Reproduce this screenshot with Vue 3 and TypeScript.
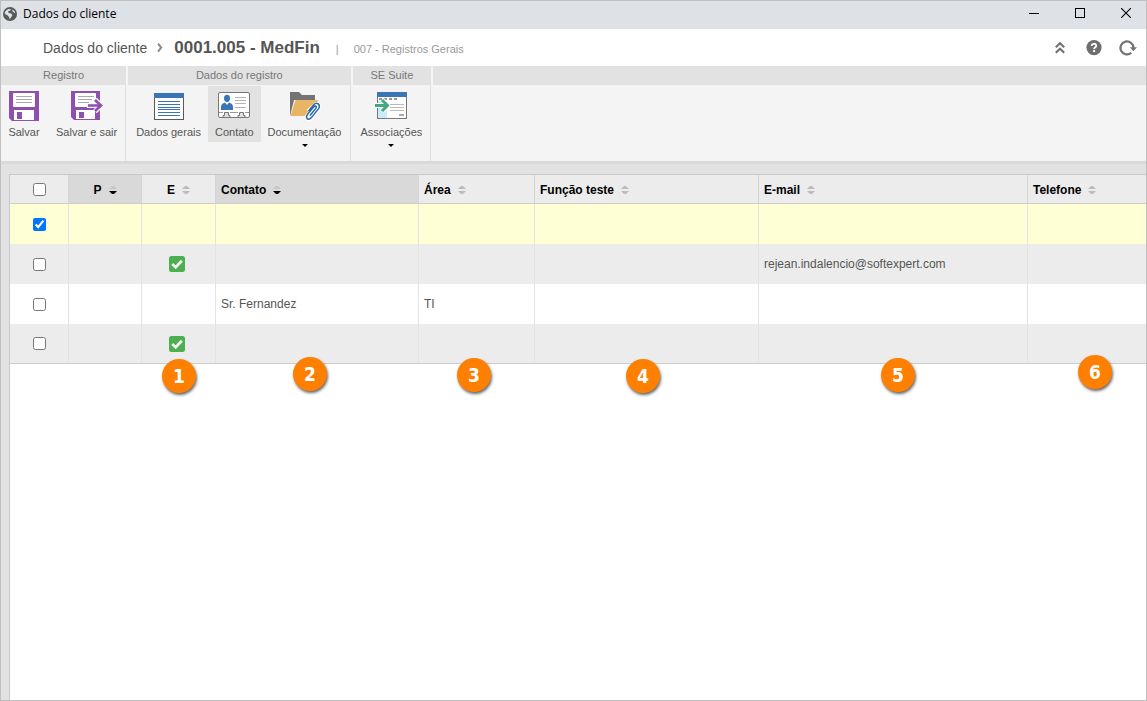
<script setup lang="ts">
import { ref } from 'vue'

interface Column {
  key: string
  label: string
  centered?: boolean
  sorted?: boolean
}

interface Contact {
  id: number
  selected: boolean
  standard: boolean
  name: string
  area: string
  role: string
  email: string
  phone: string
}

const columns: Column[] = [
  { key: 'p', label: 'P', centered: true, sorted: true },
  { key: 'e', label: 'E', centered: true },
  { key: 'contact', label: 'Contato', sorted: true },
  { key: 'area', label: 'Área' },
  { key: 'role', label: 'Função teste' },
  { key: 'email', label: 'E-mail' },
  { key: 'phone', label: 'Telefone' },
]

const rows = ref<Contact[]>([
  { id: 1, selected: true, standard: false, name: '', area: '', role: '', email: '', phone: '' },
  { id: 2, selected: false, standard: true, name: '', area: '', role: '', email: 'rejean.indalencio@softexpert.com', phone: '' },
  { id: 3, selected: false, standard: false, name: 'Sr. Fernandez', area: 'TI', role: '', email: '', phone: '' },
  { id: 4, selected: false, standard: true, name: '', area: '', role: '', email: '', phone: '' },
])

const allSelected = ref(false)

function toggleAll() {
  rows.value.forEach((r) => (r.selected = allSelected.value))
}

// Marker positions on the work area
const markers = [
  { n: 1, x: 152, y: 184 },
  { n: 2, x: 283, y: 182 },
  { n: 3, x: 447, y: 183 },
  { n: 4, x: 616, y: 184 },
  { n: 5, x: 871, y: 183 },
  { n: 6, x: 1068, y: 180 },
]
</script>

<template>
  <div class="window">
    <header class="titlebar">
      <svg class="globe" width="14" height="14" viewBox="0 0 14 14" aria-hidden="true">
        <circle cx="7" cy="7" r="7" fill="#58595b" />
        <path d="M1.8 5.2Q3 3 5.5 2L8 2.2L7.2 3.6L5 4.6L5.6 6L8.4 6.6L9.4 8.4L7.8 10.8L6.6 12.2L6 10L4.4 8.2L2 7ZM9.6 2.4L11.8 4.4L12.2 6.2L10.4 5.2L9.2 3.8Z" fill="#dee1e6" />
      </svg>
      <span class="window-title">Dados do cliente</span>
      <div class="window-controls">
        <button type="button" aria-label="Minimizar">
          <svg width="10" height="10" viewBox="0 0 10 10"><path d="M0 5.5H10" stroke="#000" /></svg>
        </button>
        <button type="button" aria-label="Maximizar">
          <svg width="10" height="10" viewBox="0 0 10 10"><rect x=".5" y=".5" width="9" height="9" fill="none" stroke="#000" /></svg>
        </button>
        <button type="button" aria-label="Fechar">
          <svg width="10" height="10" viewBox="0 0 10 10"><path d="M0 0L10 10M10 0L0 10" stroke="#000" stroke-width="1.1" /></svg>
        </button>
      </div>
    </header>

    <div class="crumbs">
      <nav class="path" aria-label="Localização">
        <a href="#" class="crumb">Dados do cliente</a>
        <svg class="sep" width="6" height="10" viewBox="0 0 6 10" aria-hidden="true"><path d="M1 .6L4.2 4.6L1 8.6" fill="none" stroke="#8a8a8a" stroke-width="2" /></svg>
        <h1>0001.005 - MedFin</h1>
        <span class="bar">|</span>
        <span class="category">007 - Registros Gerais</span>
      </nav>
      <div class="actions">
        <button type="button" aria-label="Recolher">
          <svg width="18" height="18" viewBox="0 0 18 18"><path d="M4.8 8.2L9 4.2L13.2 8.2M4.8 13.7L9 9.7L13.2 13.7" fill="none" stroke="#737373" stroke-width="2.2" /></svg>
        </button>
        <button type="button" aria-label="Ajuda">
          <svg width="18" height="18" viewBox="0 0 18 18">
            <circle cx="9" cy="8.6" r="7.6" fill="#6e6e6e" />
            <path d="M6.7 6.9C6.7 4.1 11.3 4.1 11.3 6.7C11.3 8.3 9.1 8.2 9.1 10.1" fill="none" stroke="#fff" stroke-width="1.8" />
            <rect x="8.1" y="11" width="2" height="2" fill="#fff" />
          </svg>
        </button>
        <button type="button" aria-label="Atualizar">
          <svg width="18" height="18" viewBox="0 0 18 18">
            <path d="M12.3 13.8A6.5 6.5 0 1 1 14.5 8.9" fill="none" stroke="#737373" stroke-width="2.2" />
            <path d="M10.8 8.2H18L14.4 12.2Z" fill="#737373" />
          </svg>
        </button>
      </div>
    </div>

    <div class="ribbon">
      <section class="group">
        <h2>Registro</h2>
        <div class="tools spaced">
          <button type="button" class="tool">
            <svg width="32" height="32" viewBox="0 0 32 32" aria-hidden="true">
              <path d="M1 1H31V31H4L1 28Z" fill="#8e50ae" />
              <rect x="5" y="3" width="22" height="14" rx="1" fill="#fff" />
              <path d="M8 6.5H24M8 9.5H24M8 12.5H24" stroke="#aaa" />
              <rect x="6" y="20" width="20" height="10" fill="#fff" />
              <rect x="9" y="22" width="5" height="7" fill="#8e50ae" />
            </svg>
            <span>Salvar</span>
          </button>
          <button type="button" class="tool">
            <svg width="32" height="32" viewBox="0 0 32 32" aria-hidden="true">
              <path d="M0 1H29V30H3L0 27Z" fill="#8e50ae" />
              <rect x="4" y="3" width="21" height="14" rx="1" fill="#fff" />
              <path d="M7 6.5H23M7 9.5H21M7 12.5H18" stroke="#aaa" />
              <rect x="5" y="20" width="19" height="9" fill="#fff" />
              <rect x="8" y="22" width="5" height="6" fill="#8e50ae" />
              <path d="M16 15.5H30M24 9.5L30 15.5L24 21.5" fill="none" stroke="#f4f4f4" stroke-width="5" />
              <path d="M17 15.5H30M24 10L30 15.5L24 21" fill="none" stroke="#8e50ae" stroke-width="2.6" />
            </svg>
            <span>Salvar e sair</span>
          </button>
        </div>
      </section>

      <section class="group">
        <h2>Dados do registro</h2>
        <div class="tools">
          <button type="button" class="tool">
            <svg width="32" height="32" viewBox="0 0 32 32" aria-hidden="true">
              <rect x="1.5" y="4" width="29" height="25.5" fill="#fff" stroke="#595959" />
              <rect x="1" y="3" width="30" height="5" fill="#3a76b5" />
              <path d="M5 11.5H27M5 14.5H27M5 17.5H27M5 19.5H27M5 22.5H27M5 25.5H27" stroke="#3a76b5" />
            </svg>
            <span>Dados gerais</span>
          </button>
          <button type="button" class="tool active">
            <svg width="32" height="32" viewBox="0 0 32 32" aria-hidden="true">
              <rect x=".5" y="2.5" width="31" height="25" rx="1.5" fill="#fff" stroke="#777" />
              <ellipse cx="9" cy="8.3" rx="3" ry="3.6" fill="#3a76b5" />
              <path d="M3 20V17Q3 13.5 7 12.5L9 15L11 12.5Q15 13.5 15 17V20Z" fill="#3a76b5" />
              <path d="M17 7.5H28M17 10.5H28M17 13.5H28M17 17.5H28" stroke="#b5b5b5" />
              <path d="M1 22.5H5M12 22.5H20M27 22.5H31" stroke="#999" />
              <path d="M5 27V25.5H6.5V22.5H10.5V25.5H12V27M20 27V25.5H21.5V22.5H25.5V25.5H27V27" fill="#e2e2e2" stroke="#777" />
            </svg>
            <span>Contato</span>
          </button>
          <button type="button" class="tool">
            <svg width="32" height="32" viewBox="0 0 32 32" aria-hidden="true">
              <path d="M1 2H10L13 5H26V10H5L1 26Z" fill="#737373" />
              <path d="M6.5 10H29L24 26H1.5Z" fill="#e9b565" />
              <path d="M19 21L26.5 14.2Q29.5 12.6 30.3 15.5Q30.4 17 29 18.8L21.5 28.5Q19.8 30.4 18 28.8Q16.8 27.2 18.6 25L26 16.5" fill="none" stroke="#fff" stroke-width="3.6" />
              <path d="M21 25.5L26.8 18.4Q28 16.4 26.4 15.9Q25.5 15.8 24.5 17L18.6 24.2Q16.5 27 18.4 28.8Q20.2 30.2 22.4 27.6L29.6 18.6Q31.4 15.8 29.2 13.9Q27 12.4 24.8 14.8L19.5 21" fill="none" stroke="#2866a5" stroke-width="1.5" />
            </svg>
            <span>Documentação</span>
            <i class="caret" aria-hidden="true"></i>
          </button>
        </div>
      </section>

      <section class="group">
        <h2>SE Suite</h2>
        <div class="tools">
          <button type="button" class="tool">
            <svg width="32" height="32" viewBox="0 0 32 32" aria-hidden="true">
              <rect x="2.5" y="4" width="29" height="24.5" fill="#fff" stroke="#777" />
              <rect x="3" y="11" width="9" height="17" fill="#cdeafb" />
              <rect x="2" y="2" width="30" height="5" fill="#3a76b5" />
              <path d="M4 9H22" stroke="#777" stroke-width="1.6" stroke-dasharray="3 2" />
              <path d="M15 14.5H29M15 17.5H29M15 20.5H29" stroke="#bbb" />
              <path d="M24 25H29" stroke="#aaa" stroke-width="2" />
              <path d="M0 15.5H12M7 10L12.5 15.5L7 21" fill="none" stroke="#fff" stroke-width="5" />
              <path d="M0 15.5H12M7 10L12.5 15.5L7 21" fill="none" stroke="#43a884" stroke-width="3" />
            </svg>
            <span>Associações</span>
            <i class="caret" aria-hidden="true"></i>
          </button>
        </div>
      </section>

      <div class="group rest"><div class="heading-fill"></div></div>
    </div>

    <main class="work">
      <div class="sheet">
        <table>
          <colgroup>
            <col class="c-check" />
            <col v-for="c in columns" :key="c.key" :class="'c-' + c.key" />
          </colgroup>
          <thead>
            <tr>
              <th class="center">
                <input v-model="allSelected" type="checkbox" aria-label="Selecionar todos" @change="toggleAll" />
              </th>
              <th v-for="c in columns" :key="c.key" :class="{ center: c.centered, sorted: c.sorted }">
                <button type="button" class="sort">
                  {{ c.label }}
                  <svg width="8" height="8" viewBox="0 0 8 8" aria-hidden="true">
                    <path d="M0 3H8L5 0H3Z" :fill="c.sorted ? '#c6c6c6' : '#bcbcbc'" />
                    <path d="M0 5H8L5 8H3Z" :fill="c.sorted ? '#000' : '#bcbcbc'" />
                  </svg>
                </button>
              </th>
            </tr>
          </thead>
          <tbody>
            <tr v-for="r in rows" :key="r.id" :class="{ selected: r.selected }">
              <td class="center">
                <input v-model="r.selected" type="checkbox" :aria-label="'Selecionar linha ' + r.id" />
              </td>
              <td></td>
              <td class="center flag">
                <svg v-if="r.standard" class="yes" width="16" height="16" viewBox="0 0 16 16" role="img" aria-label="Sim">
                  <rect width="16" height="16" rx="2.5" fill="#4caf50" />
                  <path d="M3.2 8L6.7 11.3L12.8 4.8" fill="none" stroke="#f2f2f2" stroke-width="2.8" />
                </svg>
              </td>
              <td>{{ r.name }}</td>
              <td>{{ r.area }}</td>
              <td>{{ r.role }}</td>
              <td>{{ r.email }}</td>
              <td>{{ r.phone }}</td>
            </tr>
          </tbody>
        </table>
        <span v-for="m in markers" :key="m.n" class="marker" :style="{ left: m.x + 'px', top: m.y + 'px' }">{{ m.n }}</span>
      </div>
    </main>
  </div>
</template>

<style>
html,
body {
  margin: 0;
  background: #fff;
}
</style>

<style scoped>
.window {
  box-sizing: border-box;
  min-height: 100vh;
  display: flex;
  flex-direction: column;
  border: 1px solid #bfbfbf;
  background: #fff;
  color: #555;
  font-family: "Liberation Sans", Arial, sans-serif;
  font-size: 12px;
}

button {
  border: 0;
  padding: 0;
  margin: 0;
  background: none;
  color: inherit;
  font: inherit;
  cursor: pointer;
}

svg {
  display: block;
}

.titlebar {
  display: flex;
  align-items: center;
  box-sizing: border-box;
  height: 28px;
  padding: 0 0 2px 2px;
  background: #dee1e6;
}

.window-title {
  margin-left: 6px;
  color: #000;
  font-family: "Open Sans", "Segoe UI", sans-serif;
  font-size: 12px;
  line-height: 16px;
}

.window-controls {
  display: flex;
  align-self: flex-start;
  height: 24px;
  margin-left: auto;
  margin-right: -3px;
}

.window-controls button {
  width: 46px;
  display: flex;
  align-items: center;
  justify-content: center;
}

.crumbs {
  display: flex;
  align-items: center;
  justify-content: space-between;
  height: 37px;
  padding: 0 9px 0 42px;
}

.path {
  display: flex;
  align-items: baseline;
}

.crumb {
  color: #555;
  font-size: 14px;
  text-decoration: none;
}

.sep {
  margin: 0 11px 0 10px;
}

h1 {
  margin: 0;
  color: #555;
  font-size: 17px;
  line-height: 20px;
}

.bar,
.category {
  color: #999;
  font-size: 11px;
}

.bar {
  margin: 0 15px 0 16px;
}

.actions {
  display: flex;
  gap: 16px;
}

.ribbon {
  display: flex;
  gap: 2px;
  height: 95px;
  background: #f4f4f4;
  border-bottom: 3px solid #d9d9d9;
}

.group {
  display: flex;
  flex-direction: column;
}

.rest {
  flex: 1;
}

.group h2,
.heading-fill {
  box-sizing: border-box;
  height: 19px;
  margin: 0;
  background: #e2e2e2;
  color: #777;
  font-size: 11px;
  font-weight: 400;
  line-height: 19px;
  text-align: center;
}

.tools {
  flex: 1;
  display: flex;
  align-items: flex-start;
  padding: 1px 1px 0;
  border-right: 1px solid #e0e0e0;
}

.spaced {
  gap: 2px;
  padding: 1px 1px 0 0;
}

.tool {
  display: flex;
  flex-direction: column;
  align-items: center;
  min-height: 56px;
  padding: 4px 7px 0;
  color: #555;
  font-size: 11px;
  line-height: 14px;
}

.tool span {
  margin-top: 3px;
}

.active {
  background: #e2e2e2;
}

.caret {
  margin-top: 5px;
  border: 3px solid transparent;
  border-top-color: #000;
  border-bottom: 0;
}

.work {
  flex: 1;
  display: flex;
  padding: 10px 0 0 8px;
  background: #e2e2e2;
}

.sheet {
  position: relative;
  flex: 1;
  min-width: 0;
  background: #fff;
  border-top: 1px solid #c8c8c8;
  border-left: 1px solid #c8c8c8;
}

table {
  width: 100%;
  table-layout: fixed;
  border-collapse: separate;
  border-spacing: 0;
  border-bottom: 1px solid #ccc;
}

.c-check { width: 59px; }
.c-p { width: 73px; }
.c-e { width: 74px; }
.c-contact { width: 203px; }
.c-area { width: 116px; }
.c-role { width: 224px; }
.c-email { width: 269px; }

th,
td {
  box-sizing: border-box;
  padding: 0 5px;
  border-right: 1px solid #e3e3e3;
  text-align: left;
  vertical-align: middle;
}

th:last-child,
td:last-child {
  border-right: 0;
}

th {
  height: 29px;
  background: #ececec;
  border-right-color: #d5d5d5;
  border-bottom: 1px solid #ccc;
  color: #000;
}

.sorted {
  background: #d9d9d9;
}

td {
  height: 40px;
  color: #555;
}

tbody tr:last-child td {
  height: 39px;
}

tbody tr:nth-child(even) {
  background: #ececec;
}

tbody tr.selected {
  background: #ffffd5;
}

.center {
  padding: 0;
  text-align: center;
}

.flag {
  padding-right: 4px;
}

.center input,
.center .yes {
  display: block;
  margin: 0 auto;
}

.sort {
  display: inline-flex;
  align-items: center;
  gap: 7px;
  padding-top: 2px;
  vertical-align: middle;
}

.marker {
  position: absolute;
  width: 34px;
  height: 34px;
  border-radius: 50%;
  background: #ff8000;
  box-shadow: 1px 2px 3px rgba(0, 0, 0, 0.6);
  color: #fff;
  font: bold 19px/34px "DejaVu Sans Condensed", "DejaVu Sans", Verdana, sans-serif;
  text-align: center;
}
</style>
